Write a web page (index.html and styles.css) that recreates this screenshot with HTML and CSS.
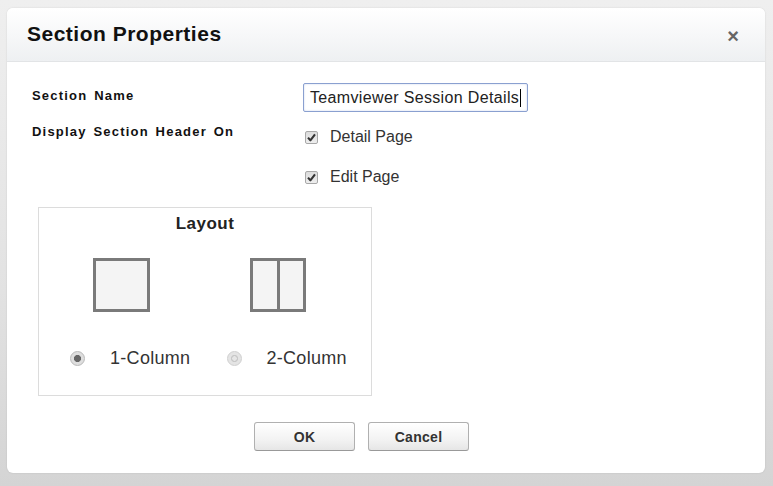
FILE: index.html
```html
<!DOCTYPE html>
<html>
<head>
<meta charset="utf-8">
<link rel="stylesheet" href="styles.css">
</head>
<body>
<div class="dialog">
  <div class="header">
    <h1 class="title">Section Properties</h1>
    <span class="close">&times;</span>
  </div>
  <div class="form">
    <div class="row row-name">
      <div class="label">Section Name</div>
      <div class="field"><div class="input">Teamviewer Session Details<span class="caret"></span></div></div>
    </div>
    <div class="row row-check">
      <div class="label">Display Section Header On</div>
      <div class="field check">
        <span class="cb"><svg viewBox="0 0 13 13" width="13" height="13"><path d="M3 6.6 L5.4 9.3 L10 3.4" fill="none" stroke="#333" stroke-width="2.1" stroke-linejoin="round"/></svg></span>
        <span>Detail Page</span>
      </div>
    </div>
    <div class="row row-check2">
      <div class="label"></div>
      <div class="field check">
        <span class="cb"><svg viewBox="0 0 13 13" width="13" height="13"><path d="M3 6.6 L5.4 9.3 L10 3.4" fill="none" stroke="#333" stroke-width="2.1" stroke-linejoin="round"/></svg></span>
        <span>Edit Page</span>
      </div>
    </div>
    <div class="layout">
      <div class="layout-title">Layout</div>
      <div class="icons">
        <div class="col-icon"></div>
        <div class="col-icon two"><div class="divider"></div></div>
      </div>
      <div class="radios">
        <span class="radio on"></span><span class="rlabel">1-Column</span>
        <span class="radio off"></span><span class="rlabel">2-Column</span>
      </div>
    </div>
    <div class="buttons">
      <button class="btn">OK</button>
      <button class="btn">Cancel</button>
    </div>
  </div>
</div>
</body>
</html>
```

FILE: styles.css
```css
* { box-sizing: border-box; }
html, body { margin: 0; }
body {
  width: 773px;
  height: 486px;
  overflow: hidden;
  padding: 8px 8px 0 7px;
  background: linear-gradient(#efefef, #e2e2e2 60%, #d4d4d4);
  font-family: "Liberation Sans", Arial, sans-serif;
  color: #222;
}
.dialog {
  width: 758px;
  height: 465px;
  background: #fff;
  border-radius: 6px;
  box-shadow: 0 0 2px rgba(0,0,0,0.12);
  overflow: hidden;
}
.header {
  height: 54px;
  display: flex;
  align-items: center;
  justify-content: space-between;
  padding: 0 26px 0 20px;
  background: linear-gradient(#ffffff, #f6f7f8 55%, #eef0f2);
  border-bottom: 1px solid #e2e4e6;
}
.title {
  margin: 0;
  font-size: 21px;
  font-weight: bold;
  color: #111;
  letter-spacing: 0.5px;
  padding-bottom: 2px;
}
.close {
  font-size: 20px;
  font-weight: bold;
  color: #666;
  padding-top: 2px;
  line-height: 20px;
}
.form {
  padding: 21px 0 0 25px;
}
.row { display: flex; }
.label {
  width: 271px;
  font-size: 13px;
  font-weight: bold;
  letter-spacing: 1.2px;
  word-spacing: 2px;
  color: #111;
  line-height: 14px;
}
.row-name { height: 29px; }
.row-name .label { padding-top: 6px; }
.input {
  width: 225px;
  height: 29px;
  border: 1px solid #8aa0d0;
  border-radius: 2px;
  box-shadow: inset 0 0 2px rgba(90,120,200,0.35);
  font-size: 16px;
  letter-spacing: 0.35px;
  color: #222;
  padding: 5px 0 0 6px;
  line-height: 18px;
  white-space: nowrap;
}
.caret {
  display: inline-block;
  width: 1px;
  height: 18px;
  background: #000;
  vertical-align: -4px;
  margin-left: 1px;
}
.row-check { margin-top: 13px; height: 24px; }
.row-check2 { margin-top: 16px; height: 24px; }
.check {
  display: flex;
  align-items: center;
  gap: 12px;
  font-size: 16px;
  color: #333;
  padding-left: 2px;
  padding-top: 0;
  height: 24px;
  align-self: flex-end;
}
.cb {
  width: 13px;
  height: 13px;
  border: 1px solid #a8a8a8;
  border-radius: 2px;
  background: linear-gradient(#dcdcdc, #eeeeee);
  display: flex;
  align-items: center;
  justify-content: center;
  position: relative;
}
.cb svg { position: absolute; left: -1px; top: -1px; }
.layout {
  margin: 18px 0 0 6px;
  width: 334px;
  height: 189px;
  border: 1px solid #dcdcdc;
}
.layout-title {
  text-align: center;
  font-size: 17px;
  font-weight: bold;
  letter-spacing: 0.5px;
  color: #222;
  line-height: 20px;
  padding-top: 6px;
}
.icons {
  display: flex;
  gap: 100px;
  margin-top: 24px;
  padding-left: 54px;
}
.col-icon {
  width: 57px;
  height: 54px;
  border: 3px solid #7a7a7a;
  background: #f4f4f4;
  position: relative;
}
.col-icon.two { width: 56px; display: flex; justify-content: center; }
.divider { width: 3px; height: 100%; background: #7a7a7a; }
.radios {
  display: flex;
  align-items: center;
  margin-top: 34px;
  padding-left: 31px;
  height: 24px;
  font-size: 18px;
  letter-spacing: 0.3px;
  color: #333;
}
.radio {
  width: 15px;
  height: 15px;
  border-radius: 50%;
  display: inline-block;
  position: relative;
}
.radio.on {
  border: 1px solid #b8b8b8;
  background: radial-gradient(circle, #666 0 3.3px, #dedede 3.8px);
}
.radio.off {
  border: 1px solid #cfcfcf;
  background: radial-gradient(circle, #e6e6e6 0 2px, #c8c8c8 2.5px 3.4px, #e4e4e4 3.8px);
  margin-left: 37px;
}
.rlabel { margin-left: 25px; }
.radio.off + .rlabel { margin-left: 24px; }
.buttons {
  display: flex;
  gap: 13px;
  margin: 26px 0 0 222px;
}
.btn {
  width: 101px;
  height: 29px;
  font-family: "Liberation Sans", Arial, sans-serif;
  font-size: 14px;
  font-weight: bold;
  color: #333;
  letter-spacing: 0.3px;
  background: linear-gradient(#ffffff, #f3f3f3 60%, #e6e6e6);
  border: 1px solid #b0b0b0;
  border-bottom-color: #999;
  border-radius: 3px;
  padding: 0;
}
```
